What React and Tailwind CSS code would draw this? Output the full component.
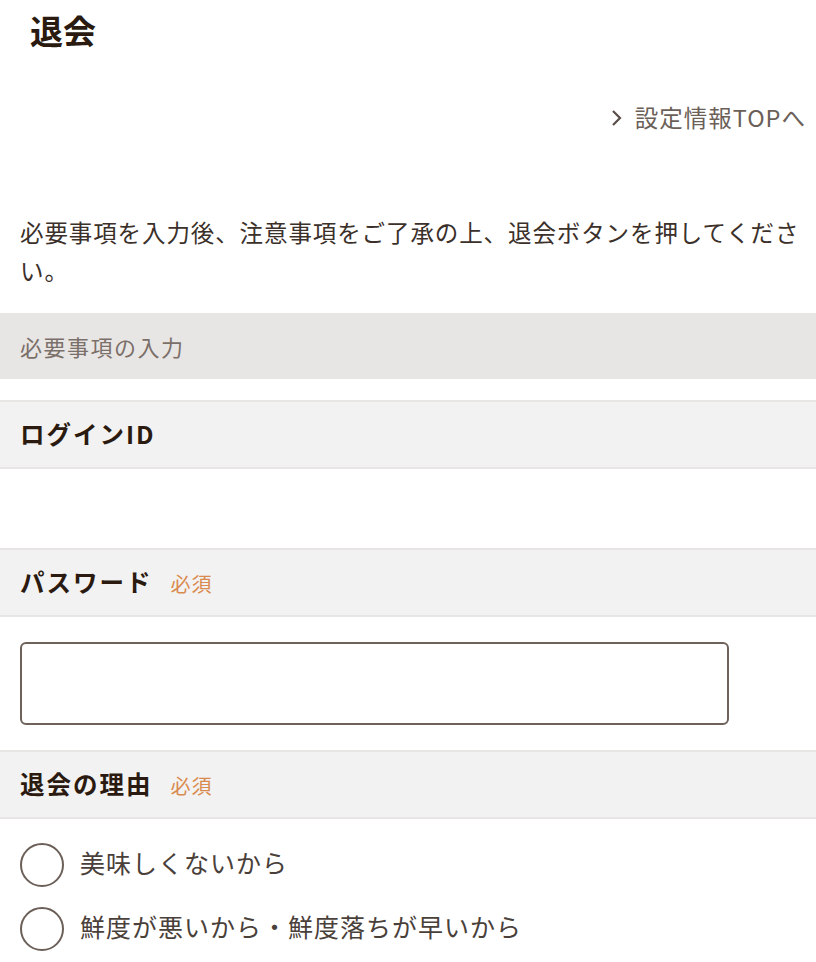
import React from "react";

const font = { fontFamily: '"Noto Sans CJK JP", "Noto Sans", sans-serif' };

function Header({ label, required }) {
  return (
    <div className="h-[69px] border-y-2 border-[#e8e6e5] bg-[#f3f2f2] flex items-center pl-[20px]">
      <span className="text-[24.5px] font-bold text-[#2a1a10] tracking-[2px]">{label}</span>
      {required && <span className="ml-[18px] text-[20px] text-[#d98a4f] mt-[2px] tracking-[1px]">必須</span>}
    </div>
  );
}

function Radio({ label }) {
  return (
    <div className="flex items-center h-[44px] pl-[20px]">
      <div className="w-[44px] h-[44px] rounded-full border-2 border-[#6b5f58] bg-white shrink-0" />
      <span className="ml-[16px] text-[25px] text-[#4a403a] tracking-[1px] -mt-[4px]">{label}</span>
    </div>
  );
}

export default function App() {
  return (
    <div className="w-[816px] min-h-[962px] bg-white overflow-hidden" style={font}>
      <div className="h-[60px] flex items-center pl-[30px]">
        <h1 className="text-[33px] font-bold text-[#2a1a10] leading-none">退会</h1>
      </div>
      <div className="mt-[40px] h-[36px] flex items-center justify-end pr-[10px]">
        <svg width="12" height="20" viewBox="0 0 12 20" className="mr-[12px]">
          <path d="M2 3 L9 10 L2 17" fill="none" stroke="#5a4e48" strokeWidth="2.2" />
        </svg>
        <span className="text-[23.5px] text-[#6b5f58] tracking-[1px]">設定情報TOPへ</span>
      </div>
      <p className="mt-[77px] pl-[20px] pr-[6px] text-[23.5px] leading-[38px] text-[#3b302a] tracking-[0.9px]">
        必要事項を入力後、注意事項をご了承の上、退会ボタンを押してください。
      </p>
      <div className="mt-[24px] h-[66px] bg-[#e8e6e5] flex items-center pl-[20px]">
        <span className="text-[22px] text-[#7b6f69] tracking-[1.5px]">必要事項の入力</span>
      </div>
      <div className="mt-[21px]">
        <Header label="ログインID" />
      </div>
      <div className="h-[79px]" />
      <Header label="パスワード" required />
      <div className="py-[25px] pl-[20px]">
        <input type="password" className="block w-[709px] h-[83px] border-2 border-[#6e625b] rounded-[6px] bg-white" />
      </div>
      <Header label="退会の理由" required />
      <div className="mt-[24px] flex flex-col gap-[20px]">
        <Radio label="美味しくないから" />
        <Radio label="鮮度が悪いから・鮮度落ちが早いから" />
      </div>
    </div>
  );
}
